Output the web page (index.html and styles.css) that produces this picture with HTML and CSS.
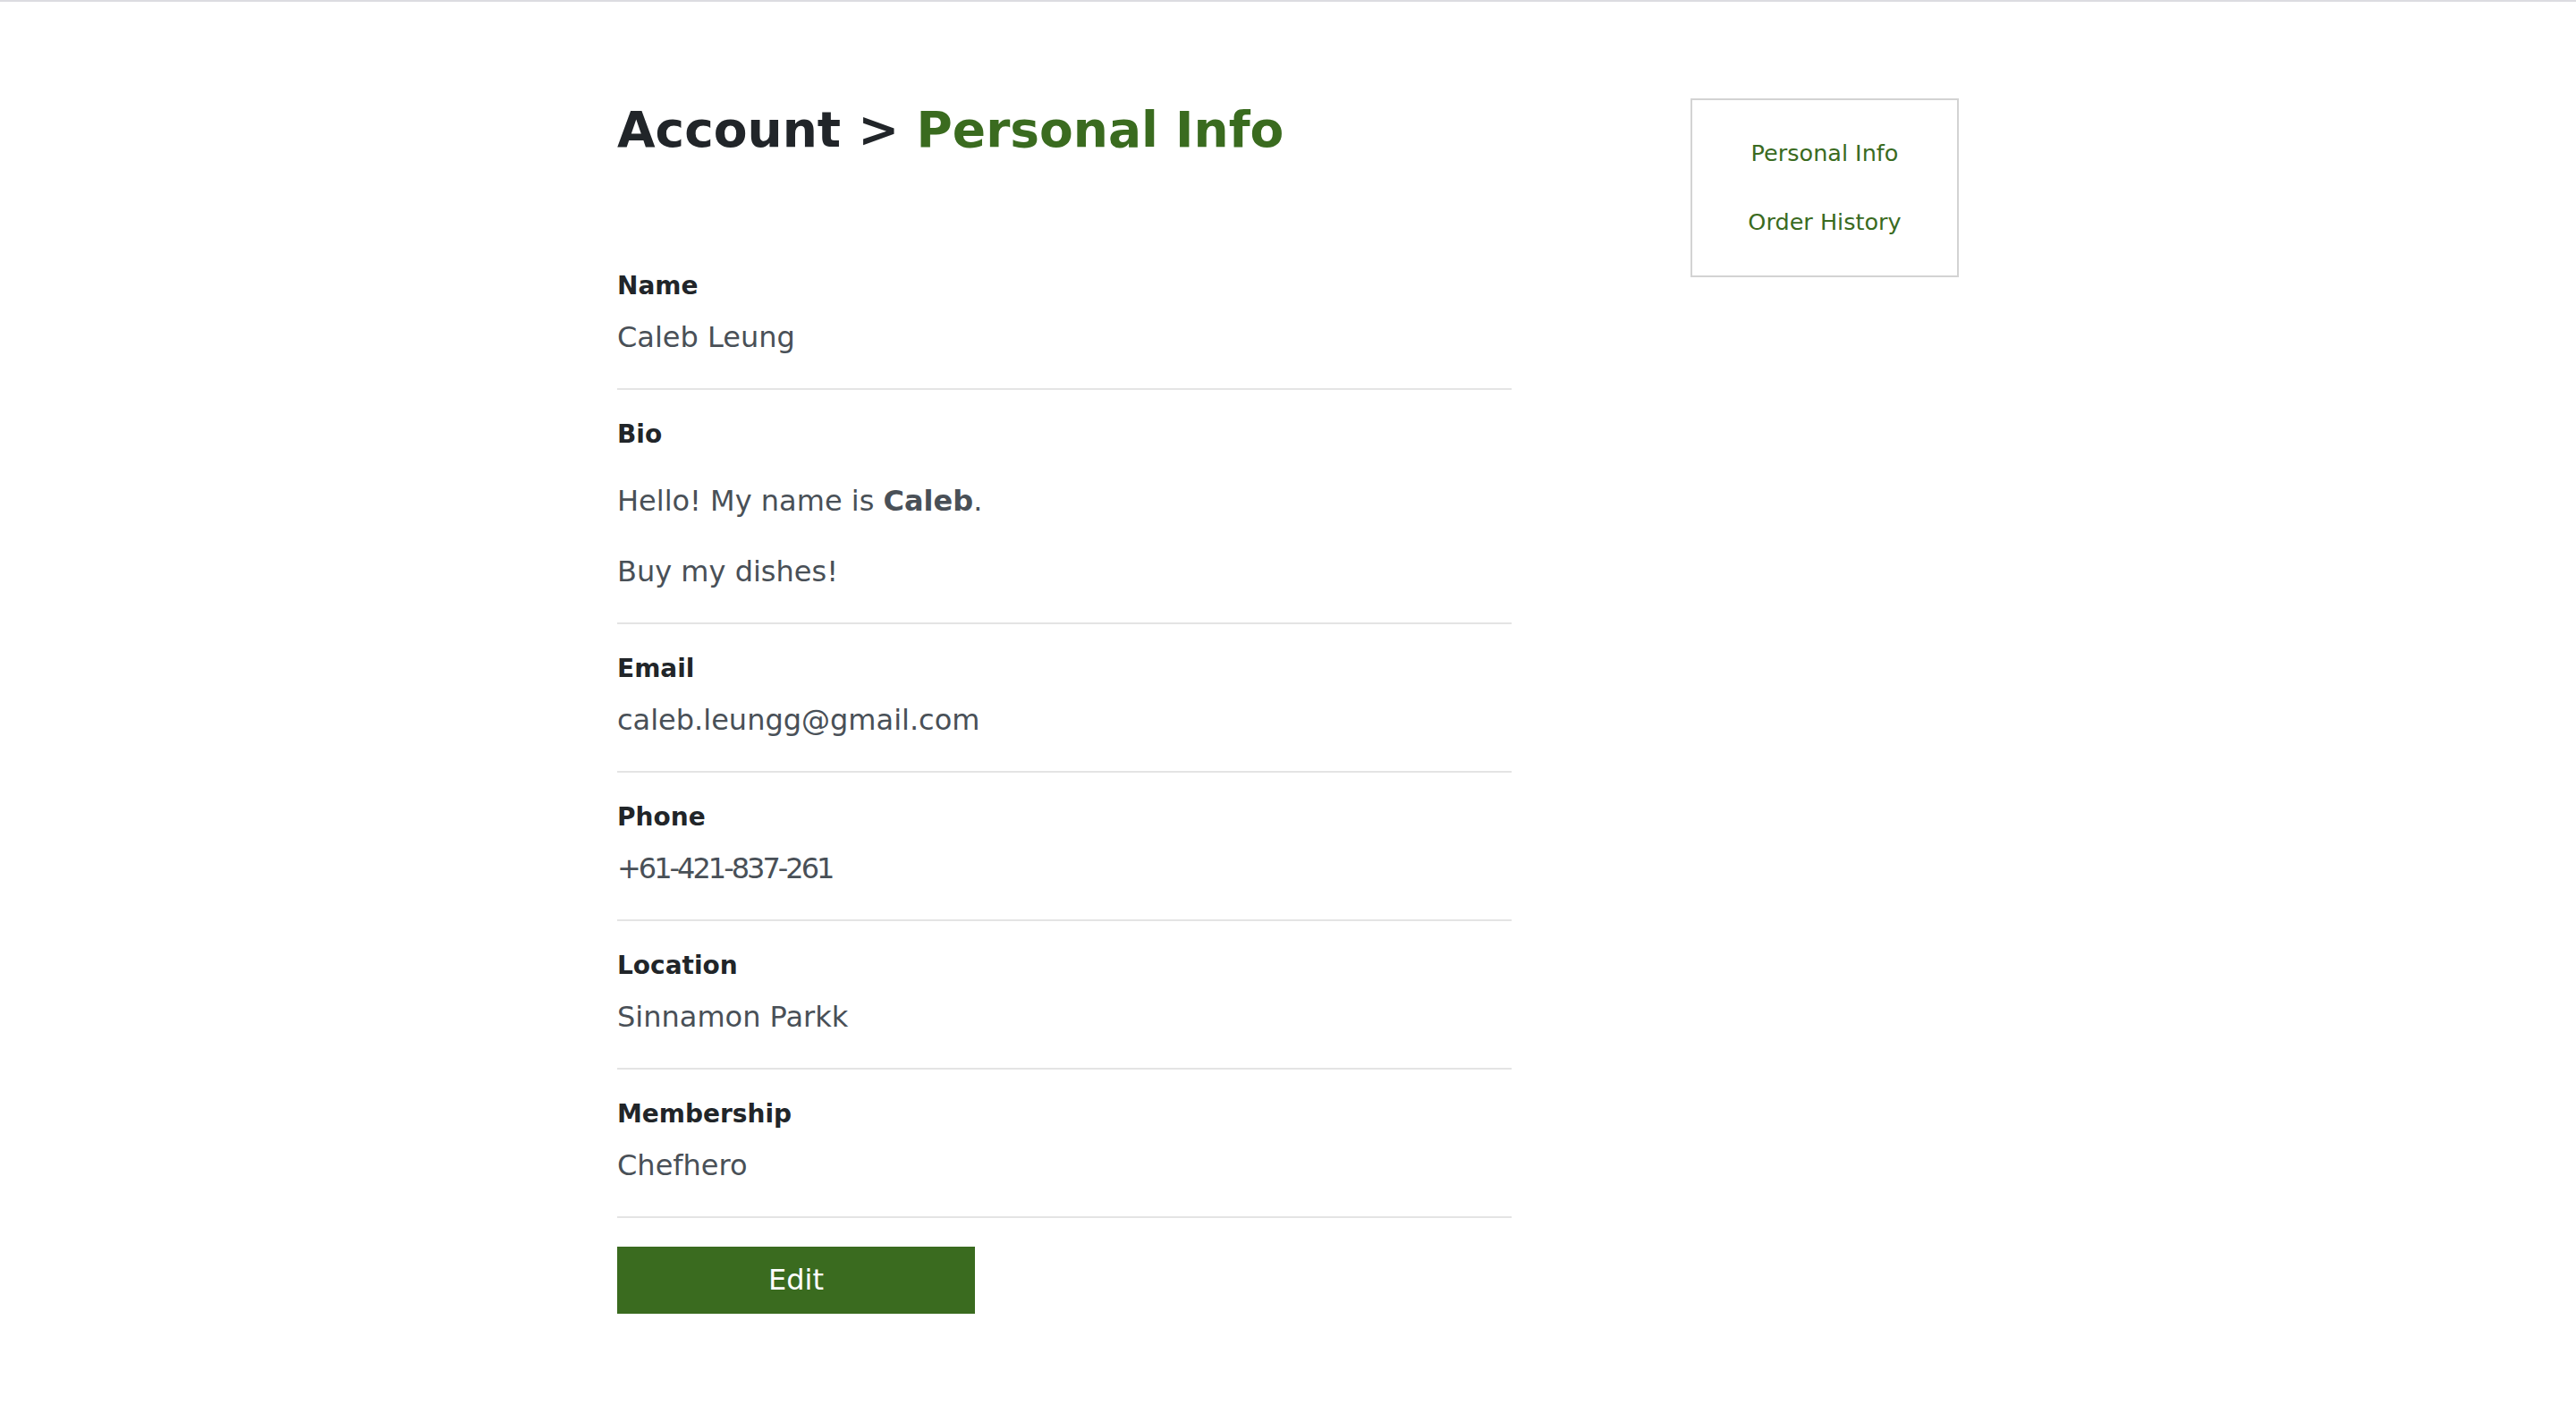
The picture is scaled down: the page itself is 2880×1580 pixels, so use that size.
FILE: index.html
```html
<!DOCTYPE html>
<html lang="en">
<head>
<meta charset="utf-8">
<title>Account - Personal Info</title>
<link rel="stylesheet" href="styles.css">
</head>
<body>
<div class="topbar"></div>
<div class="page">
  <main class="content">
    <h1 class="title">Account &gt; <span class="accent">Personal Info</span></h1>
    <section class="field">
      <div class="label">Name</div>
      <div class="value">Caleb Leung</div>
    </section>
    <section class="field">
      <div class="label">Bio</div>
      <div class="value bio">
        <p>Hello! My name is <strong>Caleb</strong>.</p>
        <p>Buy my dishes!</p>
      </div>
    </section>
    <section class="field">
      <div class="label">Email</div>
      <div class="value">caleb.leungg@gmail.com</div>
    </section>
    <section class="field">
      <div class="label">Phone</div>
      <div class="value numeric">+61-421-837-261</div>
    </section>
    <section class="field">
      <div class="label">Location</div>
      <div class="value">Sinnamon Parkk</div>
    </section>
    <section class="field">
      <div class="label">Membership</div>
      <div class="value">Chefhero</div>
    </section>
    <button class="edit" type="button">Edit</button>
  </main>
  <aside class="side">
    <nav class="side-nav">
      <a href="#" class="side-link">Personal Info</a>
      <a href="#" class="side-link">Order History</a>
    </nav>
  </aside>
</div>
</body>
</html>
```
FILE: styles.css
```css
html, body {
  margin: 0;
  padding: 0;
  background: #ffffff;
}

body {
  font-family: "DejaVu Sans", "Liberation Sans", sans-serif;
  color: #212529;
}

.topbar {
  height: 2px;
  background: #dcdce1;
}

.page {
  width: 1500px;
  margin: 0 auto;
  padding-top: 108px;
  display: flex;
  justify-content: space-between;
  align-items: flex-start;
}

.content {
  width: 1000px;
}

.title {
  margin: 0 0 89px 0;
  font-size: 55px;
  line-height: 71px;
  font-weight: 700;
  color: #212529;
  white-space: nowrap;
}

.accent {
  color: #3a6b1f;
}

.field {
  padding: 33px 0 33px 0;
  border-bottom: 2px solid #e4e4e4;
}

.label {
  font-size: 28px;
  line-height: 34px;
  font-weight: 700;
  color: #212529;
  margin-bottom: 16px;
}

.value {
  font-size: 32px;
  line-height: 48px;
  color: #495057;
}

.numeric {
  letter-spacing: -3px;
}

.bio {
  display: flex;
  flex-direction: column;
  gap: 31px;
  padding-top: 17px;
}

.bio p {
  margin: 0;
}

.bio strong {
  font-weight: 700;
}

.edit {
  display: block;
  margin-top: 32px;
  width: 400px;
  height: 75px;
  padding: 0;
  border: none;
  border-radius: 0;
  background: #3a6b1f;
  color: #ffffff;
  font-family: "DejaVu Sans", "Liberation Sans", sans-serif;
  font-size: 32px;
  line-height: 75px;
  text-align: center;
}

.side {
  width: 300px;
}

.side-nav {
  box-sizing: border-box;
  width: 300px;
  border: 2px solid #d3d3d3;
  padding: 21px 0;
  display: flex;
  flex-direction: column;
  text-align: center;
}

.side-link {
  display: block;
  padding: 20px 0;
  font-size: 25.5px;
  line-height: 37px;
  color: #3a6b1f;
  text-decoration: none;
}
```
